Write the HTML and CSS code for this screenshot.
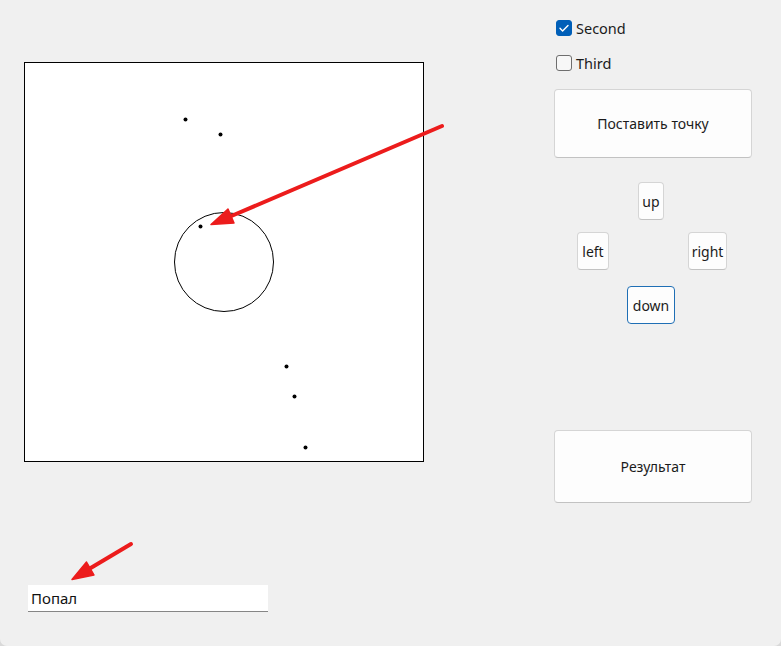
FILE: index.html
```html
<!DOCTYPE html>
<html lang="ru">
<head>
<meta charset="utf-8">
<title>Points</title>
<link rel="stylesheet" href="styles.css">
</head>
<body>
<div class="window">
  <div class="left">
    <div class="canvas">
      <svg class="plot" width="400" height="400" viewBox="0 0 400 400">
        <circle cx="200" cy="200" r="49.5" fill="none" stroke="#000" stroke-width="1"/>
        <g fill="#000">
          <circle cx="161.5" cy="57.5" r="2"/>
          <circle cx="196.5" cy="72.5" r="2"/>
          <circle cx="176.5" cy="164.5" r="2"/>
          <circle cx="262.5" cy="304.5" r="2"/>
          <circle cx="270.5" cy="334.5" r="2"/>
          <circle cx="281.5" cy="385.5" r="2"/>
        </g>
      </svg>
    </div>
    <div class="field">Попал</div>
  </div>
  <div class="right">
    <label class="check">
      <span class="box checked">
        <svg width="16" height="16" viewBox="0 0 16 16"><path d="M4 8.3l2.6 2.6L12 5.4" fill="none" stroke="#fff" stroke-width="1.4" stroke-linecap="round" stroke-linejoin="round"/></svg>
      </span>
      <span class="check-label">Second</span>
    </label>
    <label class="check">
      <span class="box"></span>
      <span class="check-label">Third</span>
    </label>
    <button class="btn big first">Поставить точку</button>
    <div class="pad">
      <div class="pad-row r1"><button class="btn small up">up</button></div>
      <div class="pad-row r2"><button class="btn small lft">left</button><button class="btn small rgt">right</button></div>
      <div class="pad-row r3"><button class="btn small down focus">down</button></div>
    </div>
    <button class="btn big result">Результат</button>
  </div>
  <svg class="arrows" width="781" height="646" viewBox="0 0 781 646">
    <g stroke="#ec1c1c" stroke-width="4" stroke-linecap="round" fill="#ec1c1c">
      <line x1="442" y1="126" x2="229" y2="217"/>
      <polygon points="211,224.5 234,223 228,209" stroke-width="1.5" stroke-linejoin="round"/>
      <line x1="131" y1="544" x2="89" y2="569"/>
      <polygon points="72,579.5 94,575 86.5,562" stroke-width="1.5" stroke-linejoin="round"/>
    </g>
  </svg>
</div>
</body>
</html>
```
FILE: styles.css
```css
html, body {
  margin: 0;
  padding: 0;
  background: #d9d9d9;
}
body {
  font-family: "Noto Sans", "Open Sans", sans-serif;
  font-size: 14px;
  color: #1b1b1b;
}
.window {
  position: relative;
  width: 781px;
  height: 646px;
  background: #f0f0f0;
  border-radius: 0 0 7px 7px;
  display: flex;
  overflow: hidden;
}
.left {
  padding: 62px 0 0 24px;
  display: flex;
  flex-direction: column;
}
.canvas {
  position: relative;
  width: 400px;
  height: 400px;
  box-sizing: border-box;
  border: 1px solid #000;
  background: #fff;
}
.plot {
  position: absolute;
  left: -1px;
  top: -1px;
}
.field {
  margin: 123px 0 0 4px;
  width: 240px;
  height: 27px;
  box-sizing: border-box;
  background: #fff;
  border-bottom: 1px solid #868686;
  padding: 3px 0 0 3px;
  font-size: 15px;
  line-height: 20px;
  color: #111;
}
.right {
  margin-left: 130px;
  width: 198px;
  display: flex;
  flex-direction: column;
  padding-top: 20px;
}
.check {
  display: flex;
  align-items: center;
  height: 16px;
  margin-left: 2px;
  gap: 4px;
  font-size: 14.5px;
}
.check + .check {
  margin-top: 19px;
}
.box {
  width: 16px;
  height: 16px;
  box-sizing: border-box;
  border: 1px solid #6e6e6e;
  border-radius: 3px;
  background: #f7f7f7;
  display: flex;
}
.box.checked {
  background: #005fb8;
  border-color: #005fb8;
}
.box.checked svg {
  margin: -1px;
}
.btn {
  font-family: inherit;
  font-size: 14px;
  color: #1b1b1b;
  background: #fdfdfd;
  border: 1px solid #d5d5d5;
  border-bottom-color: #c2c2c2;
  border-radius: 4px;
  padding: 0;
  box-sizing: border-box;
}
.big {
  width: 198px;
}
.first {
  margin-top: 18px;
  height: 69px;
}
.pad {
  display: flex;
  flex-direction: column;
}
.pad-row {
  display: flex;
}
.r1 {
  margin-top: 24px;
  padding-left: 84px;
}
.r2 {
  margin-top: 12px;
  padding-left: 23px;
}
.r3 {
  margin-top: 16px;
  padding-left: 73px;
}
.small {
  height: 38px;
}
.up { width: 26px; }
.lft { width: 32px; }
.rgt { width: 39px; margin-left: 79px; }
.down { width: 48px; }
.focus {
  border: 1px solid #1f6fb5;
}
.result {
  margin-top: 106px;
  height: 73px;
}
.arrows {
  position: absolute;
  left: 0;
  top: 0;
  pointer-events: none;
}
```
